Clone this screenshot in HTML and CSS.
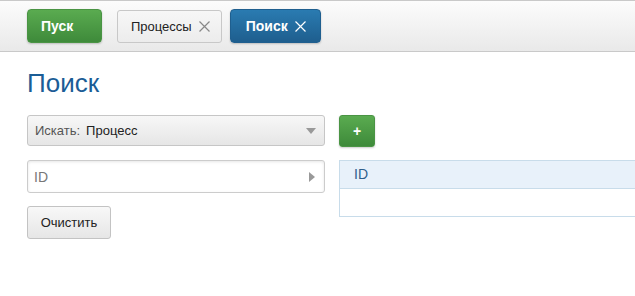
FILE: index.html
```html
<!DOCTYPE html>
<html lang="ru">

<head>
    <meta charset="UTF-8">
    <meta name="viewport" content="width=device-width, initial-scale=1.0">
    <title>Поиск</title>
    <link rel="stylesheet" href="styles.css">
</head>

<body>

    <div class="topbar">
        <button class="btn-start">Пуск</button>
        <div class="tab">Процессы
            <svg class="close" width="11" height="11" viewBox="0 0 11 11"><path d="M0.5 0.5 L10.5 10.5 M10.5 0.5 L0.5 10.5" stroke="#888" stroke-width="1.2" /></svg>
        </div>
        <div class="tab active">Поиск
            <svg class="close" width="11" height="11" viewBox="0 0 11 11"><path d="M0.5 0.5 L10.5 10.5 M10.5 0.5 L0.5 10.5" stroke="#fff" stroke-width="1.2" /></svg>
        </div>
    </div>

    <div class="content">
        <h1 class="title">Поиск</h1>

        <div class="columns">
            <div class="left">
                <div class="select">
                    <span class="label">Искать:</span>
                    <span class="value">Процесс</span>
                    <span class="arrow-down"></span>
                </div>

                <div class="field">
                    <span class="placeholder">ID</span>
                    <span class="arrow-right"></span>
                </div>

                <button class="btn-clear">Очистить</button>
            </div>

            <div class="right">
                <button class="btn-add">+</button>

                <div class="table">
                    <div class="table-head">ID</div>
                    <div class="table-row"></div>
                </div>
            </div>
        </div>
    </div>

</body>

</html>
```

FILE: styles.css
```css
body {
    margin: 0;
    font-family: Arial, "Liberation Sans", sans-serif;
    background-color: #fff;
    overflow: hidden;
}

.topbar {
    display: flex;
    align-items: center;
    height: 50px;
    padding-left: 27px;
    border-top: 1px solid #c9c9c9;
    border-bottom: 1px solid #c9c9c9;
    background: linear-gradient(#fcfcfc, #e9e9e9);
}

.btn-start {
    width: 75px;
    height: 34px;
    padding: 0 0 0 13px;
    text-align: left;
    font-family: inherit;
    font-size: 14px;
    font-weight: bold;
    color: #fff;
    border: 1px solid #4a9444;
    border-radius: 4px;
    background: linear-gradient(#5aab50, #3e8a3a);
    box-shadow: 0 1px 2px rgba(0, 0, 0, 0.2);
    margin-right: 15px;
}

.tab {
    display: flex;
    align-items: center;
    gap: 7px;
    height: 33px;
    padding: 0 11px 0 13px;
    font-size: 13px;
    color: #222;
    border: 1px solid #c8c8c8;
    border-radius: 3px;
    background: linear-gradient(#f7f7f7, #ececec);
    margin-right: 8px;
    box-sizing: border-box;
}

.tab.active {
    height: 34px;
    font-size: 14px;
    font-weight: bold;
    color: #fff;
    border-color: #1f5f8f;
    border-radius: 4px;
    background: linear-gradient(#2a7bb1, #1e5e8e);
    padding: 0 14px 0 15px;
    box-shadow: 0 1px 2px rgba(0, 0, 0, 0.2);
}

.close {
    display: block;
}

.content {
    padding-left: 27px;
}

.title {
    margin: 15px 0 16px;
    font-size: 26px;
    font-weight: normal;
    color: #1b5d96;
    line-height: 32px;
}

.columns {
    display: flex;
    gap: 14px;
}

.left {
    width: 298px;
    display: flex;
    flex-direction: column;
    align-items: flex-start;
}

.select {
    display: flex;
    align-items: center;
    width: 298px;
    height: 31px;
    padding: 0 7px;
    box-sizing: border-box;
    border: 1px solid #c6c6c6;
    border-radius: 3px;
    background: linear-gradient(#f7f7f7, #e6e6e6);
    font-size: 13px;
}

.label {
    color: #555;
    margin-right: 6px;
}

.value {
    color: #222;
    flex: 1;
}

.arrow-down {
    width: 0;
    height: 0;
    border-left: 5px solid transparent;
    border-right: 5px solid transparent;
    border-top: 6px solid #999;
    margin-right: 1px;
}

.field {
    display: flex;
    align-items: center;
    width: 298px;
    height: 33px;
    margin-top: 14px;
    padding: 0 7px 0 6px;
    box-sizing: border-box;
    border: 1px solid #cccccc;
    border-radius: 3px;
    background: #fff;
    box-shadow: inset 0 1px 3px rgba(0, 0, 0, 0.1);
    font-size: 14px;
}

.placeholder {
    color: #777;
    flex: 1;
}

.arrow-right {
    width: 0;
    height: 0;
    border-top: 5px solid transparent;
    border-bottom: 5px solid transparent;
    border-left: 6px solid #999;
    margin-right: 2px;
}

.btn-clear {
    width: 84px;
    height: 33px;
    margin-top: 13px;
    font-family: inherit;
    font-size: 13px;
    color: #222;
    border: 1px solid #c3c3c3;
    border-radius: 3px;
    background: linear-gradient(#f8f8f8, #e6e6e6);
}

.right {
    display: flex;
    flex-direction: column;
    align-items: flex-start;
}

.btn-add {
    width: 36px;
    height: 32px;
    padding: 0;
    font-family: inherit;
    font-size: 14px;
    font-weight: bold;
    color: #fff;
    border: 1px solid #4a9444;
    border-radius: 3px;
    background: linear-gradient(#5aab50, #3e8a3a);
    box-shadow: 0 1px 2px rgba(0, 0, 0, 0.2);
}

.table {
    width: 320px;
    margin-top: 13px;
    border: 1px solid #c8dcea;
}

.table-head {
    height: 27px;
    line-height: 27px;
    padding-left: 14px;
    font-size: 14px;
    color: #2f5f8c;
    background: #e8f1fa;
    border-bottom: 1px solid #c8dcea;
}

.table-row {
    height: 27px;
}
```
